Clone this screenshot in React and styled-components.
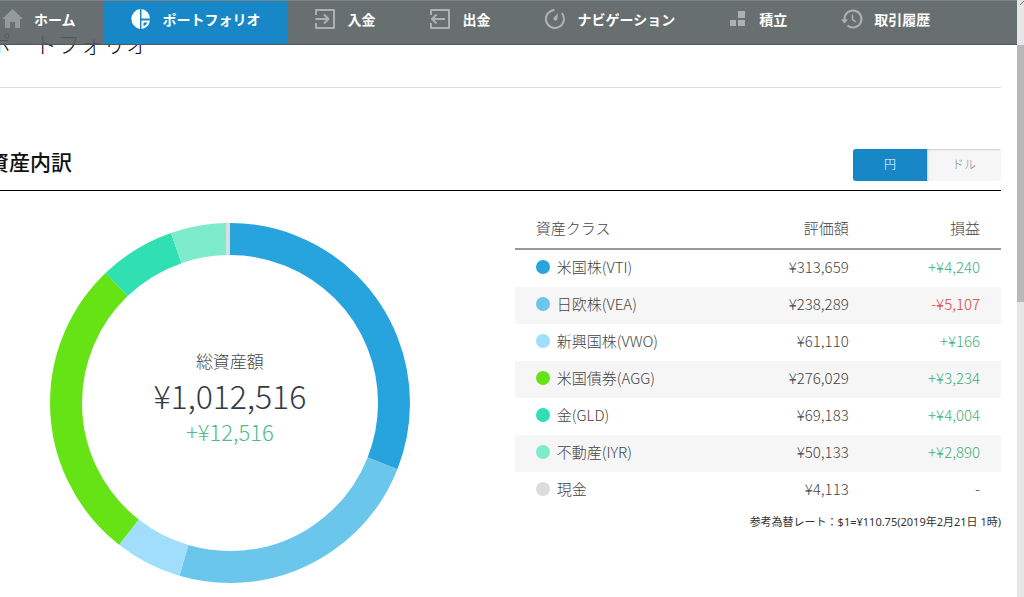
import React, { useState } from "react";
import styled, { createGlobalStyle } from "styled-components";

const assets = [
  { name: "米国株(VTI)", color: "#27a3dd", value: 313659, profit: 4240 },
  { name: "日欧株(VEA)", color: "#6ac7eb", value: 238289, profit: -5107 },
  { name: "新興国株(VWO)", color: "#a0defb", value: 61110, profit: 166 },
  { name: "米国債券(AGG)", color: "#65e314", value: 276029, profit: 3234 },
  { name: "金(GLD)", color: "#30dfb2", value: 69183, profit: 4004 },
  { name: "不動産(IYR)", color: "#7eebcc", value: 50133, profit: 2890 },
  { name: "現金", color: "#dcdcdc", value: 4113, profit: 0 },
];

const total = assets.reduce((sum, asset) => sum + asset.value, 0);

const yen = (n) => `¥${Math.abs(n).toLocaleString("en-US")}`;

const signedYen = (n) => {
  if (n === 0) return "-";
  return (n > 0 ? "+" : "-") + yen(n);
};

const menu = [
  { label: "ホーム", icon: HomeIcon },
  { label: "ポートフォリオ", icon: PieIcon },
  { label: "入金", icon: DepositIcon },
  { label: "出金", icon: WithdrawIcon },
  { label: "ナビゲーション", icon: GaugeIcon },
  { label: "積立", icon: BlocksIcon },
  { label: "取引履歴", icon: HistoryIcon },
];

function HomeIcon() {
  return (
    <svg width="20" height="20" overflow="visible" fill="#96999c">
      <path d="M11.500 0L22 10H19V19H14V13H9V19H4V10H1Z" />
    </svg>
  );
}

function PieIcon() {
  return (
    <svg width="20" height="20" fill="#fff">
      <path d="M10 0.100A10 10 0 0 0 10 19.900Z" />
      <path d="M11.500 0.100A10 10 0 0 1 20 9.500H11.500Z" />
      <path
        fillRule="evenodd"
        d="M11.500 11.500H20A10 10 0 0 1 11.500 19.900ZM13.500 13.500V17.300A8 8 0 0 0 17.500 13.500Z"
      />
    </svg>
  );
}

function DepositIcon() {
  return (
    <svg
      width="20"
      height="20"
      fill="none"
      stroke="#aeb1b3"
      strokeWidth="2"
      strokeLinejoin="round"
    >
      <path d="M1 6V1H19V19H1V14" />
      <path d="M0.500 10H13M9 5.500L13.500 10L9 14.500" />
    </svg>
  );
}

function WithdrawIcon() {
  return (
    <svg
      width="20"
      height="20"
      fill="none"
      stroke="#aeb1b3"
      strokeWidth="2"
      strokeLinejoin="round"
    >
      <path d="M1 6V1H19V19H1V14" />
      <path d="M2.500 10H15M6.500 5.500L2 10L6.500 14.500" />
    </svg>
  );
}

function GaugeIcon() {
  return (
    <svg width="20" height="20" fill="none" stroke="#aeb1b3" strokeWidth="2">
      <path d="M9.500 1A9 9 0 1 0 16.800 4.200" />
      <path d="M13 4L12.300 10.300A2 2 0 0 1 8.500 9Z" fill="#aeb1b3" stroke="none" />
    </svg>
  );
}

function BlocksIcon() {
  return (
    <svg width="17" height="20" fill="#aeb1b3">
      <path d="M9 2H16V9H9ZM1 11H7V17H1ZM9 11H16V17H9Z" />
    </svg>
  );
}

function HistoryIcon() {
  return (
    <svg
      width="20"
      height="20"
      overflow="visible"
      fill="none"
      stroke="#aeb1b3"
      strokeWidth="2"
    >
      <path d="M3.500 11V10A8.500 8.500 0 1 1 6.500 16.500" />
      <path d="M0 10.500H7L3.500 14.500Z" fill="#aeb1b3" stroke="none" />
      <path d="M11.500 5.500V10.500L15 13" strokeWidth="1.500" />
    </svg>
  );
}

const RADIUS = 164;
const THICKNESS = 32;

function DonutChart() {
  const circumference = 2 * Math.PI * RADIUS;
  let start = 0;
  return (
    <Ring viewBox="0 0 360 360" role="img" aria-label="資産内訳">
      <g transform="rotate(-90 180 180)" fill="none" strokeWidth={THICKNESS}>
        {assets.map((asset) => {
          const length = (asset.value / total) * circumference;
          const offset = -start;
          start += length;
          return (
            <circle
              key={asset.name}
              cx="180"
              cy="180"
              r={RADIUS}
              stroke={asset.color}
              strokeDasharray={`${length} ${circumference - length}`}
              strokeDashoffset={offset}
            />
          );
        })}
      </g>
    </Ring>
  );
}

function App() {
  const [active, setActive] = useState("ポートフォリオ");
  const [currency, setCurrency] = useState("円");

  return (
    <Frame>
      <GlobalStyle />
      <Viewport>
        <Nav>
          {menu.map(({ label, icon: Icon }) => (
            <NavLink
              key={label}
              href="#"
              $active={label === active}
              onClick={() => setActive(label)}
            >
              <Icon />
              {label}
            </NavLink>
          ))}
        </Nav>
        <Content>
          <PageTitle>ポートフォリオ</PageTitle>
          <SectionHeader>
            <SectionTitle>資産内訳</SectionTitle>
            <Toggle>
              {["円", "ドル"].map((unit) => (
                <ToggleButton
                  key={unit}
                  type="button"
                  $active={unit === currency}
                  onClick={() => setCurrency(unit)}
                >
                  {unit}
                </ToggleButton>
              ))}
            </Toggle>
          </SectionHeader>
          <Breakdown>
            <Chart>
              <DonutChart />
              <Summary>
                <SummaryLabel>総資産額</SummaryLabel>
                <SummaryTotal>¥1,012,516</SummaryTotal>
                <SummaryProfit>+¥12,516</SummaryProfit>
              </Summary>
            </Chart>
            <Details>
              <Table>
                <thead>
                  <tr>
                    <HeadCell>資産クラス</HeadCell>
                    <HeadCell $right>評価額</HeadCell>
                    <HeadCell $right>損益</HeadCell>
                  </tr>
                </thead>
                <tbody>
                  {assets.map((asset) => (
                    <Row key={asset.name}>
                      <Cell>
                        <AssetName>
                          <Dot $color={asset.color} />
                          {asset.name}
                        </AssetName>
                      </Cell>
                      <Cell $right>{yen(asset.value)}</Cell>
                      <ProfitCell $right $profit={asset.profit}>
                        {signedYen(asset.profit)}
                      </ProfitCell>
                    </Row>
                  ))}
                </tbody>
              </Table>
              <Rate>参考為替レート：$1=¥110.75(2019年2月21日 1時)</Rate>
            </Details>
          </Breakdown>
        </Content>
      </Viewport>
      <ScrollTrack>
        <ScrollArrow viewBox="0 0 7 45">
          <path d="M3 5L7 1" />
        </ScrollArrow>
        <ScrollThumb />
      </ScrollTrack>
    </Frame>
  );
}

const GlobalStyle = createGlobalStyle`
  * {
    box-sizing: border-box;
  }

  body {
    margin: 0;
    background: #fff;
    color: #444;
    font-family: "Noto Sans CJK JP", sans-serif;
    font-weight: 300;
  }
`;

const Frame = styled.div`
  display: flex;
  height: 100vh;
  overflow: hidden;
`;

const Viewport = styled.div`
  flex: 1;
  min-width: 0;
  overflow: hidden;
`;

const Nav = styled.nav`
  position: relative;
  z-index: 1;
  display: flex;
  height: 45px;
  padding-right: 16px;
  margin-left: -26px;
  background: rgba(88, 95, 97, 0.9);
  border-top: 1px solid #7c8486;
  border-bottom: 1px solid #50585b;
`;

const NavLink = styled.a`
  display: flex;
  align-items: center;
  gap: 13px;
  padding: 0 27px 7px;
  background: ${({ $active }) => ($active ? "#1887c7" : "transparent")};
  color: #fff;
  font-size: 14px;
  font-weight: 700;
  line-height: 20px;
  white-space: nowrap;
  text-decoration: none;
`;

const Content = styled.main`
  margin: -21px 16px 0 -12px;
`;

const PageTitle = styled.h1`
  margin: 0;
  padding-bottom: 25px;
  border-bottom: 1px solid #ddd;
  color: #111;
  font-size: 23px;
  font-weight: 300;
  line-height: 38px;
`;

const SectionHeader = styled.div`
  display: flex;
  align-items: flex-start;
  justify-content: space-between;
  padding: 61px 0 9px;
  border-bottom: 1px solid #000;
`;

const SectionTitle = styled.h2`
  margin: 0;
  color: #111;
  font-size: 21px;
  font-weight: 500;
  line-height: 24px;
`;

const Toggle = styled.div`
  display: flex;
  width: 148px;
  border-radius: 3px;
  overflow: hidden;
`;

const ToggleButton = styled.button`
  flex: 1;
  height: 32px;
  padding: 0 0 3px;
  border: 0;
  background: ${({ $active }) => ($active ? "#1887c7" : "#f6f6f6")};
  box-shadow: ${({ $active }) =>
    $active ? "inset 0 0 1px #0d5c8c" : "inset 1px 1px 2px #ccc"};
  color: ${({ $active }) => ($active ? "#fff" : "#888")};
  font-family: inherit;
  font-size: 12px;
  font-weight: 300;
`;

const Breakdown = styled.div`
  display: flex;
  gap: 43px;
`;

const Chart = styled.div`
  display: grid;
  flex: 1;
  place-items: center;
  align-self: flex-start;
  padding-top: 32px;
`;

const Ring = styled.svg`
  grid-area: 1 / 1;
  width: 360px;
  max-width: 100%;
`;

const Summary = styled.div`
  grid-area: 1 / 1;
  padding-bottom: 12px;
  text-align: center;
`;

const SummaryLabel = styled.div`
  font-size: 17px;
  line-height: 24px;
`;

const SummaryTotal = styled.div`
  color: #333b47;
  font-size: 32px;
  line-height: 44px;
`;

const SummaryProfit = styled.div`
  color: #53b98b;
  font-size: 22px;
  line-height: 28px;
`;

const Details = styled.div`
  width: 48%;
`;

const Table = styled.table`
  width: 100%;
  border-collapse: separate;
  border-spacing: 0;
  font-size: 15px;
  line-height: 22px;
`;

const HeadCell = styled.th`
  width: ${({ $right }) => ($right ? "27%" : "46%")};
  padding: 26px 21px 9px;
  border-bottom: 2px solid #999;
  font-weight: 300;
  text-align: ${({ $right }) => ($right ? "right" : "left")};
`;

const Row = styled.tr`
  &:nth-child(even) {
    background: #f6f6f6;
  }
`;

const Cell = styled.td`
  height: 37px;
  padding: 0 21px 3px;
  text-align: ${({ $right }) => ($right ? "right" : "left")};
`;

const profitColor = ({ $profit }) => {
  if ($profit === 0) return "inherit";
  return $profit > 0 ? "#3fae7b" : "#e0402f";
};

const ProfitCell = styled(Cell)`
  color: ${profitColor};
`;

const AssetName = styled.div`
  display: flex;
  align-items: center;
  gap: 7px;
`;

const Dot = styled.span`
  width: 14px;
  height: 14px;
  border-radius: 50%;
  background: ${({ $color }) => $color};
`;

const Rate = styled.p`
  margin: 5px 0 0;
  color: #333;
  font-family: "Noto Sans", "Noto Sans CJK JP", sans-serif;
  font-size: 11px;
  font-weight: 400;
  line-height: 16px;
  text-align: right;
`;

const ScrollTrack = styled.div`
  flex: none;
  width: 7px;
  background: #e6e6e6;
`;

const ScrollArrow = styled.svg`
  display: block;
  width: 7px;
  height: 45px;
  fill: none;
  stroke: #777;
`;

const ScrollThumb = styled.div`
  height: 43%;
  background: #b8b8b8;
`;

export default App;
